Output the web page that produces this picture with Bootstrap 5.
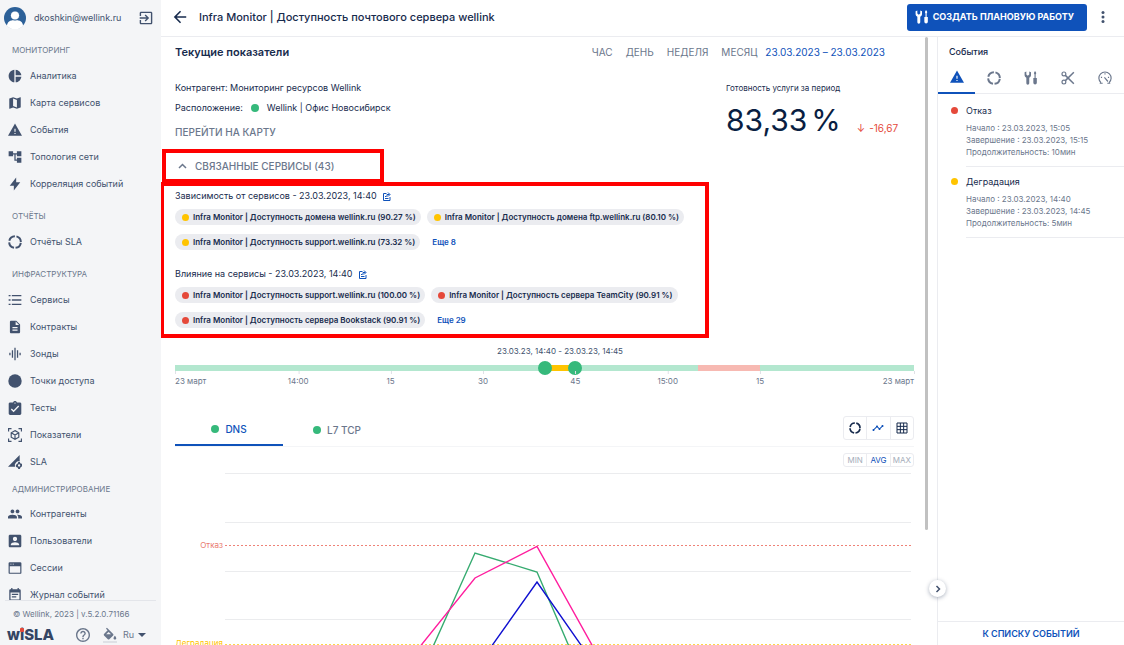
<!DOCTYPE html>
<html lang="ru">
<head>
<meta charset="utf-8">
<meta name="viewport" content="width=device-width, initial-scale=1">
<title>wiSLA — Infra Monitor</title>
<link href="https://cdn.jsdelivr.net/npm/bootstrap@5.3.0/dist/css/bootstrap.min.css" rel="stylesheet">
<style>
:root{--ink:#172b4d;--slate:#42526e;--mute:#6b778c;--blue:#0f52ba;--line:#ebecf0;--ok:#36b97b;--warn:#ffc400;--bad:#e5493a}
body{font-family:Inter,"Liberation Sans",sans-serif;font-size:9px;line-height:12px;color:var(--ink);height:100vh;overflow:hidden}
svg.ico{width:14px;height:14px;fill:currentColor;flex:none;display:block}
svg.ln{fill:none;stroke:currentColor;stroke-width:2}
button{background:none;border:0;padding:0;color:inherit;font-size:inherit;line-height:inherit}
a{text-decoration:none;color:inherit}
.side{width:161px;background:#f4f5f7;color:var(--slate)}
.user{height:36px;padding:0 8px 0 4px}
.side .menu{overflow:hidden;min-height:0}
.side h2{font-size:8px;line-height:12px;font-weight:400;color:var(--mute);margin:0;padding:13px 12px 6px}
.side .menu>h2:first-child{padding-top:9px}
.side h2.tight{padding-top:8px;padding-bottom:5px}
.side .item{height:27px;padding-left:8px;gap:8px}
.sfoot{margin:0 5px;border-top:1px solid #e3e5ea;height:46px;padding:7px 3px 0 2px;color:var(--mute)}
.copy{font-size:8px;padding-left:6px;margin-bottom:7px}
.logo{font-size:15px;line-height:16px;font-weight:800;color:#344563;position:relative}
.logo::after{content:"";position:absolute;left:13px;top:1px;width:4px;height:4px;background:#e5493a;border-radius:1px}
.fillbtn{border-bottom:2px solid #dfe1e6;margin:0 6px 0 13px}
.lang{margin-right:7px}
.top{height:37px;border-bottom:1px solid var(--line);padding:0 19px 2px 12px}
.top h1{font-size:11px;line-height:14px;font-weight:500;margin:0}
.create,.create:hover{background:var(--blue);color:#fff;font-size:9px;line-height:12px;font-weight:700;border:0;border-radius:3px;height:27px;padding:0 13px 0 8px}
.dots{margin-left:14px}
.main{min-width:0;padding:8px 23px 0 14px;overflow:hidden;position:relative}
.bar{position:absolute;right:9px;top:0;width:3px;height:493px;background:#c1c1c1;border-radius:2px}
.muted{color:var(--mute)} .blue{color:var(--blue)}
.main h2{font-size:11px;line-height:14px;font-weight:600;margin:0}
.headrow{margin-bottom:23px}
.period{font-size:10px;font-weight:500;gap:13px;margin-right:29px}
.period .blue{margin-left:-5px}
.dotc{width:8px;height:8px;border-radius:50%;flex:none;display:inline-block;background:var(--ok)}
.dotc.warn{background:var(--warn)} .dotc.bad{background:var(--bad)} .dotc.sm{width:7px;height:7px}
.caps{font-size:10px;font-weight:500;color:var(--mute)}
.ready{width:188px;white-space:nowrap}
.ready .cap{font-size:8px;margin-bottom:8px}
.big{font-size:30px;line-height:36px;color:#091e42;display:flex;gap:4px}
.delta{font-size:10px;color:var(--bad);display:flex;gap:4px}
.frame{border:4px solid #f00;position:relative}
.f1{width:222px;height:34px;margin:11px 0 0 -13px;padding-left:12px}
.f2{width:549px;margin:-1px 0 0 -15px;padding:4px 11px 6px}
.f2 h3{font-size:9px;line-height:12px;height:12px;font-weight:400;margin:0 0 7px;display:flex;align-items:center;gap:6px}
.f2 h3 svg{display:block}
.chips{gap:9px 6px}
.chips+h3{margin-top:18px}
.chip{background:#ebecf0;border-radius:8px;height:16px;padding:0 5px 0 7px;gap:4px;font-size:8px;font-weight:600}
.more{font-weight:600;font-size:8px;color:var(--blue);margin-left:6px}
.range{margin-top:7px}
.range .lab{font-size:8px;color:var(--slate);text-align:center;margin-left:31px}
.track{position:relative;height:6px;margin-top:8px;background:#b3e7cf}
.seg{position:absolute;top:0;height:6px}
.track input{position:absolute;left:-7px;top:-4px;width:calc(100% + 14px);height:14px;margin:0;appearance:none;background:none;pointer-events:none}
.track input::-webkit-slider-thumb{appearance:none;width:14px;height:14px;border-radius:50%;background:var(--ok);pointer-events:auto}
.ticks{position:relative;height:18px;font-size:8px;line-height:10px;color:var(--mute)}
.ticks span{position:absolute;top:0;padding-top:5px;transform:translateX(-50%)}
.ticks span::before{content:"";position:absolute;left:50%;top:0;width:1px;height:3px;background:#dfe1e6}
.ticks .first{transform:none}.ticks .first::before{left:0}
.ticks .last{transform:none;right:0}.ticks .last::before{left:100%}
.ptabs{margin-top:26px;height:32px;border-bottom:1px solid #f4f5f7}
.ptab{width:108px;height:32px;gap:6px;font-size:10px;font-weight:500;color:var(--mute)}
.ptab.on{color:var(--blue);border-bottom:2px solid var(--blue)}
.grp{width:71px;border:1px solid var(--line);border-radius:3px;color:var(--ink)}
.grp button{flex:1;border-left:1px solid var(--line);display:flex;align-items:center;justify-content:center}
.grp button:first-child{border-left:0}
.grp .on{color:var(--blue)}
.views{height:24px;margin-bottom:6px}.views svg.ico{width:12px;height:12px}
.aggr{height:14px;margin:6px 0 6px auto;font-size:8px;color:#a5adba}
.yl{width:50px;font-size:8px;line-height:10px;text-align:right;padding-right:2px;position:relative;color:#e97a6f}
.yl span{display:block;padding-top:67px}
.yl span+span{padding-top:88px;color:var(--warn)}
.plot{height:220px;min-width:0;margin-right:3px}
.plot path{vector-effect:non-scaling-stroke;fill:none}
.events{width:187px;border-left:1px solid var(--line);position:relative}
.events h2{font-size:9px;line-height:12px;font-weight:500;margin:0;padding:9px 11px 0}
.etabs{height:36px;border-bottom:1px solid var(--line);color:var(--mute)}
.etabs button{flex:1;display:flex;align-items:center;justify-content:center;height:36px;padding-top:3px}
.etabs .on{color:var(--blue);border-bottom:2px solid var(--blue)}
.etabs+.ev{margin-top:2px}
.ev{margin-left:28px;padding:7px 0 8px;border-bottom:1px solid var(--line);font-size:8px;color:var(--mute)}
.ev b{font-size:9px;line-height:14px;font-weight:400;color:var(--ink);display:block;margin:1px 0 4px;position:relative}
.ev b .dotc{position:absolute;left:-15px;top:3px}
.tolist{border-top:1px solid var(--line);height:24px;color:var(--blue);font-weight:600}
.fold{position:absolute;left:-9px;bottom:48px;width:17px;height:17px;border-radius:50%;background:#fff;box-shadow:0 1px 4px rgba(9,30,66,.35);color:var(--slate);display:flex;align-items:center;justify-content:center}
</style>
</head>
<body class="d-flex">
<svg class="d-none" xmlns="http://www.w3.org/2000/svg">
<symbol id="warn" viewBox="0 0 24 24"><path d="M0 22h24L12 1 0 22zm13-3h-2v-2h2v2zm0-4h-2v-5h2v5z"/></symbol>
<symbol id="donut" viewBox="0 0 24 24"><circle cx="12" cy="12" r="10" fill="none" stroke="currentColor" stroke-width="3.4" stroke-dasharray="12.9 2.808" stroke-dashoffset="-1.4"/></symbol>
<symbol id="tools" viewBox="0 0 24 24"><path d="M1 2v5c0 2.500 1.500 4 3 4.700V21a2 2 0 0 0 5 0v-9.300c1.500-.7 3-2.200 3-4.700V2L9 1v5L6.500 8 4 6V1zM18 1h2l1 3-1 2v6h2v8a3 3 0 0 1-6 0v-8h2V6l-1-2z"/></symbol>
</svg>

<aside class="side d-flex flex-column flex-shrink-0">
  <div class="user d-flex align-items-center">
    <svg width="22" height="22" viewBox="0 0 22 22"><circle cx="11" cy="11" r="11" fill="#2c6098"/><path d="M3 19c0-4 3-6 8-6s8 2 8 6a11 11 0 0 1-16 0z" fill="#fff"/><circle cx="11" cy="8.500" r="4.600" fill="#fff" stroke="#2c6098"/></svg>
    <span class="ms-2 me-auto">dkoshkin@wellink.ru</span>
    <button type="button" aria-label="Выйти"><svg class="ico" viewBox="2 2 20 20"><path d="M10.090 15.590L11.500 17l5-5-5-5-1.410 1.410L12.670 11H3v2h9.670l-2.580 2.590zM19 3H5c-1.110 0-2 .9-2 2v4h2V5h14v14H5v-4H3v4c0 1.100.89 2 2 2h14c1.100 0 2-.9 2-2V5c0-1.100-.9-2-2-2z"/></svg></button>
  </div>
  <nav class="menu flex-grow-1">
    <h2>МОНИТОРИНГ</h2>
    <a href="#" class="item d-flex align-items-center"><svg class="ico" viewBox="1 1 22 22"><path d="M11 2v20c-5.070-.5-9-4.790-9-10s3.930-9.500 9-10zm2.030 0v8.990H22c-.47-4.740-4.240-8.520-8.970-8.990zm0 11.010V22c4.740-.47 8.500-4.250 8.970-8.990h-8.970z"/></svg>Аналитика</a>
    <a href="#" class="item d-flex align-items-center"><svg class="ico" viewBox="1 1 22 22"><path d="M20.500 3l-.16.030L15 5.100 9 3 3.360 4.900c-.21.070-.36.250-.36.480V20.500c0 .28.220.5.5.5l.16-.03L9 18.900l6 2.100 5.640-1.900c.21-.07.36-.25.36-.48V3.500c0-.28-.22-.5-.5-.5zM15 19l-6-2.110V5l6 2.110V19z"/></svg>Карта сервисов</a>
    <a href="#" class="item d-flex align-items-center"><svg class="ico"><use href="#warn"/></svg>События</a>
    <a href="#" class="item d-flex align-items-center"><svg class="ico" viewBox="1 1 22 22"><path d="M22 11V3h-7v3H9V3H2v8h7V8h2v10h4v3h7v-8h-7v3h-2V8h2v3z"/></svg>Топология сети</a>
    <a href="#" class="item d-flex align-items-center"><svg class="ico" viewBox="0 0 24 24"><path d="M10 15H3L14 1v8h7L10 23z"/></svg>Корреляция событий</a>
    <h2>ОТЧЁТЫ</h2>
    <a href="#" class="item d-flex align-items-center"><svg class="ico"><use href="#donut"/></svg>Отчёты SLA</a>
    <h2>ИНФРАСТРУКТУРА</h2>
    <a href="#" class="item d-flex align-items-center"><svg class="ico" viewBox="1 1 22 22"><path d="M2 4h3v2H2zm5 0h15v2H7zM2 11h3v2H2zm5 0h15v2H7zM2 18h3v2H2zm5 0h15v2H7z"/></svg>Сервисы</a>
    <a href="#" class="item d-flex align-items-center"><svg class="ico" viewBox="1 1 22 22"><path d="M14 2H6c-1.100 0-1.990.9-1.990 2L4 20c0 1.100.89 2 1.990 2H18c1.100 0 2-.9 2-2V8l-6-6zm2 16H8v-2h8v2zm0-4H8v-2h8v2zm-3-5V3.500L18.500 9H13z"/></svg>Контракты</a>
    <a href="#" class="item d-flex align-items-center"><svg class="ico" viewBox="1 1 22 22"><path d="M7 18h2V6H7v12zm4 4h2V2h-2v20zm-8-8h2v-4H3v4zm12 4h2V6h-2v12zm4-8v4h2v-4h-2z"/></svg>Зонды</a>
    <a href="#" class="item d-flex align-items-center"><svg class="ico" viewBox="0 0 24 24"><circle cx="12" cy="12" r="11.500"/></svg>Точки доступа</a>
    <a href="#" class="item d-flex align-items-center"><svg class="ico" viewBox="2 1 20 20"><path d="M19 3h-4.180C14.400 1.840 13.300 1 12 1c-1.300 0-2.400.84-2.820 2H5c-1.100 0-2 .9-2 2v14c0 1.100.9 2 2 2h14c1.100 0 2-.9 2-2V5c0-1.100-.9-2-2-2zm-7 0c.55 0 1 .45 1 1s-.45 1-1 1-1-.45-1-1 .45-1 1-1zm-2 14l-4-4 1.410-1.410L10 14.170l6.590-6.590L18 9l-8 8z"/></svg>Тесты</a>
    <a href="#" class="item d-flex align-items-center"><svg class="ico ln" viewBox="0 0 24 24"><path d="M1 6V1h5M18 1h5v5M1 18v5h5M18 23h5v-5M12 4.500l6.500 3.700v7.600L12 19.500l-6.500-3.700V8.200zM5.500 8.200L12 12l6.500-3.800M12 12v7.500"/></svg>Показатели</a>
    <a href="#" class="item d-flex align-items-center"><svg class="ico" viewBox="0 0 24 24"><path d="M20 0v11a7 7 0 0 0-8 9H0z"/><path fill-rule="evenodd" d="M17.500 12h3l.5 2 2 1 1.500 0 0 4-1.500 1-2 2-.5 2h-3l-.5-2-2-1-1.500-1v-3l1.500-1 2-2zM19 16a2 2 0 1 0 0 4 2 2 0 0 0 0-4z"/></svg>SLA</a>
    <h2 class="tight">АДМИНИСТРИРОВАНИЕ</h2>
    <a href="#" class="item d-flex align-items-center"><svg class="ico" viewBox="1 1 22 22"><path d="M16 11c1.660 0 2.990-1.340 2.990-3S17.660 5 16 5c-1.660 0-3 1.340-3 3s1.340 3 3 3zm-8 0c1.660 0 2.990-1.340 2.990-3S9.660 5 8 5C6.340 5 5 6.340 5 8s1.340 3 3 3zm0 2c-2.330 0-7 1.170-7 3.500V19h14v-2.500c0-2.330-4.670-3.500-7-3.500zm8 0c-.29 0-.62.020-.97.050 1.160.84 1.970 1.970 1.970 3.450V19h6v-2.500c0-2.330-4.670-3.500-7-3.500z"/></svg>Контрагенты</a>
    <a href="#" class="item d-flex align-items-center"><svg class="ico" viewBox="2 2 20 20"><path d="M3 5v14c0 1.100.89 2 2 2h14c1.100 0 2-.9 2-2V5c0-1.100-.9-2-2-2H5c-1.110 0-2 .9-2 2zm12 4c0 1.660-1.340 3-3 3s-3-1.340-3-3 1.340-3 3-3 3 1.340 3 3zm-9 8c0-2 4-3.100 6-3.100s6 1.100 6 3.100v1H6v-1z"/></svg>Пользователи</a>
    <a href="#" class="item d-flex align-items-center"><svg class="ico" viewBox="0 0 24 24"><path fill-rule="evenodd" d="M3 2h18a2 2 0 0 1 2 2v16a2 2 0 0 1-2 2H3a2 2 0 0 1-2-2V4a2 2 0 0 1 2-2zm0 7v11h18V9zM4 4.500V6h2V4.500zm4 0V6h2V4.500z"/></svg>Сессии</a>
    <a href="#" class="item d-flex align-items-center"><svg class="ico" viewBox="2 1 20 22"><path d="M17 10H7v2h10v-2zm2-7h-1V1h-2v2H8V1H6v2H5c-1.110 0-1.990.9-1.990 2L3 19c0 1.100.89 2 2 2h14c1.100 0 2-.9 2-2V5c0-1.100-.9-2-2-2zm0 16H5V8h14v11zm-5-5H7v2h7v-2z"/></svg>Журнал событий</a>
  </nav>
  <div class="sfoot">
    <div class="copy">© Wellink, 2023 | v.5.2.0.71166</div>
    <div class="d-flex align-items-center">
      <span class="logo">wiSLA</span>
      <button type="button" class="ms-auto" aria-label="Справка"><svg class="ico" viewBox="2 2 20 20"><path d="M11 18h2v-2h-2v2zm1-16C6.480 2 2 6.480 2 12s4.480 10 10 10 10-4.480 10-10S17.520 2 12 2zm0 18c-4.410 0-8-3.590-8-8s3.590-8 8-8 8 3.590 8 8-3.590 8-8 8zm0-14c-2.210 0-4 1.790-4 4h2c0-1.100.9-2 2-2s2 .9 2 2c0 2-3 1.750-3 5h2c0-2.250 3-2.500 3-5 0-2.210-1.790-4-4-4z"/></svg></button>
      <button type="button" class="fillbtn" aria-label="Тема"><svg class="ico" viewBox="2 0 20 18"><path d="M16.560 8.940L7.620 0 6.210 1.410l2.380 2.380-5.150 5.150c-.59.590-.59 1.540 0 2.120l5.500 5.500c.29.290.68.440 1.060.440s.77-.15 1.060-.44l5.500-5.500c.59-.58.59-1.530 0-2.120zM19 11.500s-2 2.170-2 3.500c0 1.100.9 2 2 2s2-.9 2-2c0-1.330-2-3.500-2-3.500z"/><path d="M6.500 9.500L10 6l3.500 3.500z" fill="#f4f5f7"/></svg></button>
      <button type="button" class="lang d-flex align-items-center gap-1">Ru <svg width="8" height="4" viewBox="0 0 8 4" fill="#42526e"><path d="M0 0h8L4 4z"/></svg></button>
    </div>
  </div>
</aside>

<div class="d-flex flex-column flex-grow-1" style="min-width:0">
  <header class="top d-flex align-items-center flex-shrink-0">
    <button type="button" aria-label="Назад" class="me-2 pe-1"><svg class="ico" viewBox="3 3 18 18"><path d="M20 11H7.830l5.590-5.590L12 4l-8 8 8 8 1.410-1.410L7.830 13H20v-2z"/></svg></button>
    <h1>Infra Monitor | Доступность почтового сервера wellink</h1>
    <button type="button" class="create btn ms-auto d-flex align-items-center gap-1"><svg class="ico"><use href="#tools"/></svg>СОЗДАТЬ ПЛАНОВУЮ РАБОТУ</button>
    <button type="button" class="dots" aria-label="Ещё"><svg class="d-block" width="4" height="12" viewBox="0 0 4 12" fill="#42526e"><circle cx="2" cy="1.500" r="1.500"/><circle cx="2" cy="6" r="1.500"/><circle cx="2" cy="10.500" r="1.500"/></svg></button>
  </header>
  <div class="d-flex flex-grow-1" style="min-height:0">
    <main class="main flex-grow-1">
      <div class="bar"></div>
      <div class="headrow d-flex align-items-center">
        <h2 class="me-auto">Текущие показатели</h2>
        <div class="period d-flex muted">
          <button type="button">ЧАС</button><button type="button">ДЕНЬ</button><button type="button">НЕДЕЛЯ</button><button type="button">МЕСЯЦ</button>
          <button type="button" class="blue">23.03.2023 – 23.03.2023</button>
        </div>
      </div>
      <div class="d-flex">
        <div class="me-auto">
          <div class="mb-2">Контрагент: Мониторинг ресурсов Wellink</div>
          <div class="d-flex align-items-center mb-2">Расположение: <i class="dotc mx-2"></i> Wellink | Офис Новосибирск</div>
          <a href="#" class="caps d-block pt-1">ПЕРЕЙТИ НА КАРТУ</a>
        </div>
        <div class="ready">
          <div class="cap">Готовность услуги за период</div>
          <div class="d-flex align-items-end"><span class="big"><span>83,33</span> <span>%</span></span><span class="delta ms-3 mb-1"><span>↓</span> <span>-16,67</span></span></div>
        </div>
      </div>
      <div class="frame f1 d-flex align-items-center">
        <button type="button" class="caps d-flex align-items-center gap-2"><svg class="ln" width="9" height="8" viewBox="0 0 9 8" style="stroke-width:1.500"><path d="M1 6l3.500-3.500L8 6"/></svg>СВЯЗАННЫЕ СЕРВИСЫ (43)</button>
      </div>
      <div class="frame f2">
        <h3>Зависимость от сервисов - 23.03.2023, 14:40 <a href="#" class="blue" aria-label="Открыть"><svg class="ln" width="8" height="9" viewBox="0 0 16 18"><path d="M7 3H1v14h13v-7M4 13h7M4 9h3M8 9V5h5M10 1l4 4-4 4"/></svg></a></h3>
        <div class="chips d-flex flex-wrap align-items-center">
          <span class="chip d-flex align-items-center"><i class="dotc sm warn"></i>Infra Monitor | Доступность домена wellink.ru (90.27 %)</span>
          <span class="chip d-flex align-items-center"><i class="dotc sm warn"></i>Infra Monitor | Доступность домена ftp.wellink.ru (80.10 %)</span>
          <span class="chip d-flex align-items-center"><i class="dotc sm warn"></i>Infra Monitor | Доступность support.wellink.ru (73.32 %)</span>
          <a href="#" class="more">Еще 8</a>
        </div>
        <h3>Влияние на сервисы - 23.03.2023, 14:40 <a href="#" class="blue" aria-label="Открыть"><svg class="ln" width="8" height="9" viewBox="0 0 16 18"><path d="M7 3H1v14h13v-7M4 13h7M4 9h3M8 9V5h5M10 1l4 4-4 4"/></svg></a></h3>
        <div class="chips d-flex flex-wrap align-items-center">
          <span class="chip d-flex align-items-center"><i class="dotc sm bad"></i>Infra Monitor | Доступность support.wellink.ru (100.00 %)</span>
          <span class="chip d-flex align-items-center"><i class="dotc sm bad"></i>Infra Monitor | Доступность сервера TeamCity (90.91 %)</span>
          <span class="chip d-flex align-items-center"><i class="dotc sm bad"></i>Infra Monitor | Доступность сервера Bookstack (90.91 %)</span>
          <a href="#" class="more">Еще 29</a>
        </div>
      </div>
      <div class="range">
        <div class="lab">23.03.23, 14:40 - 23.03.23, 14:45</div>
        <div class="track">
          <div class="seg" style="left:50%;width:4.167%;background:#ffc400"></div>
          <div class="seg" style="left:70.83%;width:8.333%;background:#f7b9b2"></div>
          <input type="range" min="0" max="120" value="60" aria-label="Начало интервала">
          <input type="range" min="0" max="120" value="65" aria-label="Конец интервала">
        </div>
        <div class="ticks">
          <span class="first">23 март</span><span style="left:16.67%">14:00</span><span style="left:29.17%">15</span><span style="left:41.67%">30</span><span style="left:54.17%">45</span><span style="left:66.67%">15:00</span><span style="left:79.17%">15</span><span class="last">23 март</span>
        </div>
      </div>
      <div class="ptabs d-flex align-items-end">
        <button type="button" class="ptab on d-flex align-items-center justify-content-center"><i class="dotc"></i>DNS</button>
        <button type="button" class="ptab d-flex align-items-center justify-content-center"><i class="dotc"></i>L7 TCP</button>
        <div class="grp views d-flex ms-auto">
          <button type="button" aria-label="Диаграмма"><svg class="ico"><use href="#donut"/></svg></button>
          <button type="button" class="on" aria-label="График"><svg class="ico" viewBox="0 0 24 24"><path d="M23 8c0 1.100-.9 2-2 2-.18 0-.35-.02-.51-.07l-3.560 3.550c.05.160.070.340.070.520 0 1.100-.9 2-2 2s-2-.9-2-2c0-.18.020-.36.070-.52l-2.550-2.550c-.16.050-.34.070-.52.070s-.36-.02-.52-.07l-4.550 4.560c.05.160.070.330.070.510 0 1.100-.9 2-2 2s-2-.9-2-2 .9-2 2-2c.18 0 .35.020.51.070l4.560-4.550C8.020 9.360 8 9.180 8 9c0-1.100.9-2 2-2s2 .9 2 2c0 .18-.02.36-.07.520l2.550 2.550c.16-.05.34-.07.52-.07s.36.020.52.070l3.550-3.560C19.020 8.350 19 8.180 19 8c0-1.100.9-2 2-2s2 .9 2 2z"/></svg></button>
          <button type="button" aria-label="Таблица"><svg class="ico ln" viewBox="0 0 24 24"><path d="M2 2h20v20H2zM2 8.700h20M2 15.300h20M8.700 2v20M15.300 2v20"/></svg></button>
        </div>
      </div>
      <div class="grp aggr d-flex">
        <button type="button">MIN</button><button type="button" class="on">AVG</button><button type="button">MAX</button>
      </div>
      <div class="d-flex">
        <div class="yl"><span>Отказ</span><span>Деградация</span></div>
        <svg class="plot flex-grow-1" viewBox="0 0 686 220" preserveAspectRatio="none">
          <path stroke="#ebecee" d="M0 .5H686M0 49.500H686M0 98.500H686M0 146.500H686"/>
          <path stroke="#ee8277" stroke-dasharray="2 2" d="M0 72.500H686"/>
          <path stroke="#ffd54a" stroke-dasharray="2 2" d="M0 171.500H686"/>
          <path stroke="#36ab70" stroke-width="1.400" d="M189 216L250 80L312 99L352 192"/>
          <path stroke="#1010d0" stroke-width="1.400" d="M254 191L312 109L372 195"/>
          <path stroke="#ff1d9e" stroke-width="1.400" d="M161 216L250 105L312 73.500L372 181"/>
        </svg>
      </div>
    </main>
    <aside class="events d-flex flex-column flex-shrink-0">
      <h2>События</h2>
      <div class="etabs d-flex flex-shrink-0">
        <button type="button" class="on" aria-label="Аварии"><svg class="ico"><use href="#warn"/></svg></button>
        <button type="button" aria-label="SLA"><svg class="ico"><use href="#donut"/></svg></button>
        <button type="button" aria-label="Работы"><svg class="ico"><use href="#tools"/></svg></button>
        <button type="button" aria-label="Разрывы"><svg class="ico ln" viewBox="0 0 24 24"><circle cx="5" cy="5" r="3.300"/><circle cx="5" cy="19" r="3.300"/><path d="M22 2L7.500 16.500M7.500 7.500L22 22" stroke-width="2.500"/></svg></button>
        <button type="button" aria-label="Нагрузка"><svg class="ico ln" viewBox="0 0 24 24"><path d="M3 21h5M16 21h5M5 20a10.500 10.500 0 1 1 14 0M11 11l6 7M12 4v2M5 11h2M19 11h-2"/></svg></button>
      </div>
      <div class="ev"><b><i class="dotc bad sm"></i>Отказ</b>Начало : 23.03.2023, 15:05<br>Завершение : 23.03.2023, 15:15<br>Продолжительность: 10мин</div>
      <div class="ev"><b><i class="dotc warn sm"></i>Деградация</b>Начало : 23.03.2023, 14:40<br>Завершение : 23.03.2023, 14:45<br>Продолжительность: 5мин</div>
      <a href="#" class="tolist mt-auto d-flex align-items-center justify-content-center">К СПИСКУ СОБЫТИЙ</a>
      <button type="button" class="fold" aria-label="Свернуть"><svg class="ln" width="8" height="8" viewBox="0 0 8 8" style="stroke-width:1.500"><path d="M2.500 1l3 3-3 3"/></svg></button>
    </aside>
  </div>
</div>
<script src="https://cdn.jsdelivr.net/npm/bootstrap@5.3.0/dist/js/bootstrap.bundle.min.js"></script>
</body>
</html>
